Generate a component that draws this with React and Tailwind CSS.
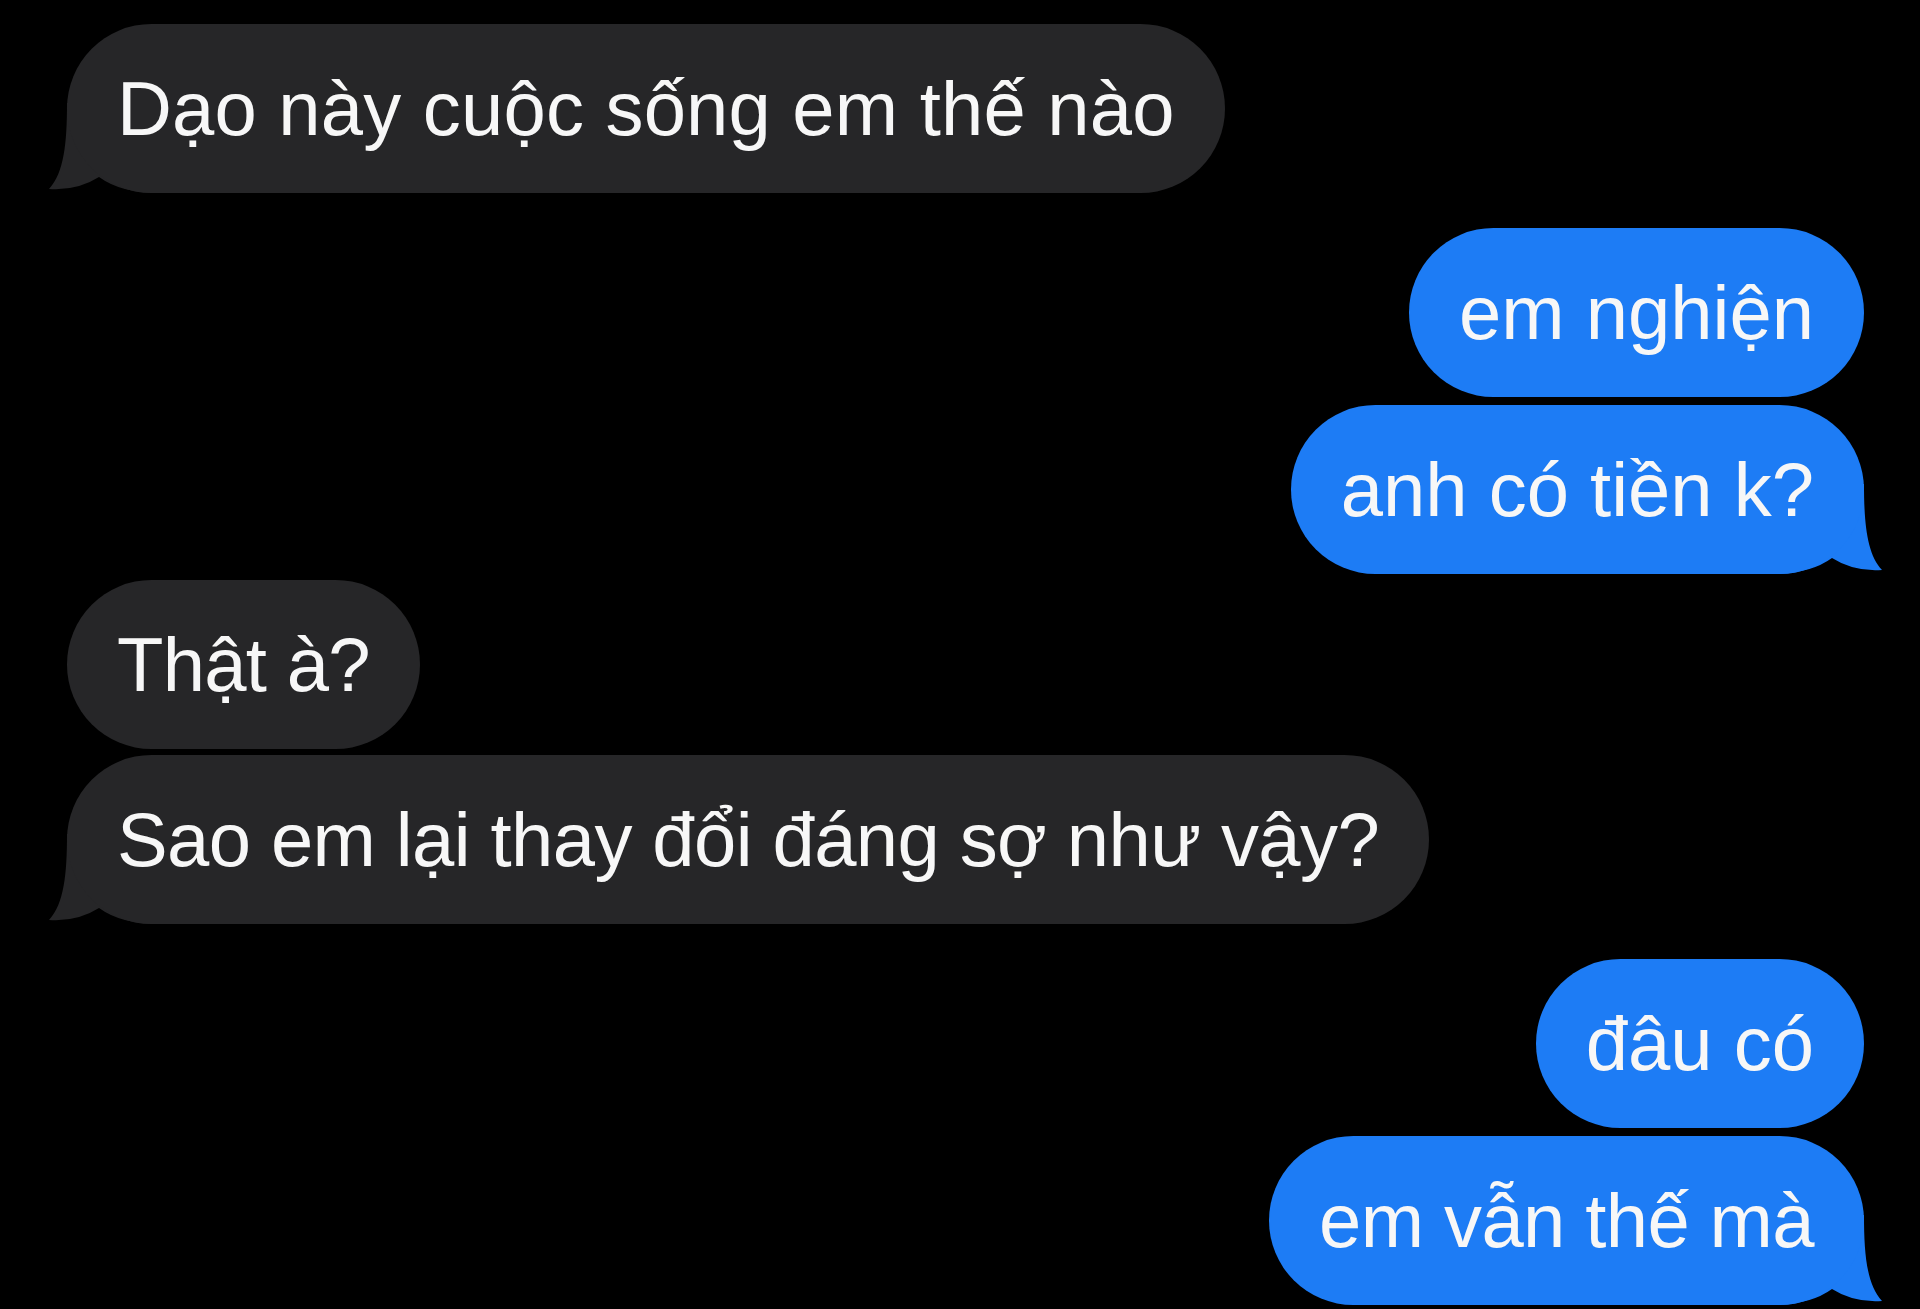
const messages = [
  { from: "them", text: "Dạo này cuộc sống em thế nào", tail: true, gap: "mt-0", track: "tracking-[0.2px]" },
  { from: "me", text: "em nghiện", tail: false, gap: "mt-[35px]", track: "tracking-normal" },
  { from: "me", text: "anh có tiền k?", tail: true, gap: "mt-[8px]", track: "tracking-normal" },
  { from: "them", text: "Thật à?", tail: false, gap: "mt-[6px]", track: "tracking-[-0.7px]" },
  { from: "them", text: "Sao em lại thay đổi đáng sợ như vậy?", tail: true, gap: "mt-[6px]", track: "tracking-[-0.6px]" },
  { from: "me", text: "đâu có", tail: false, gap: "mt-[35px]", track: "tracking-normal" },
  { from: "me", text: "em vẫn thế mà", tail: true, gap: "mt-[8px]", track: "tracking-[-0.6px]" },
];

function Tail({ side, color }) {
  // bubble tail, drawn for the left side and mirrored for the right
  return (
    <svg
      width="110"
      height="90"
      viewBox="0 0 110 90"
      className={
        side === "left"
          ? "absolute bottom-0 left-[-18px]"
          : "absolute bottom-0 right-[-18px] -scale-x-100"
      }
    >
      <path
        d="M18 0 C18 40 15 70 0 86 Q 28 88 50 74 Q 72 90 110 90 L110 0 Z"
        fill={color}
      />
    </svg>
  );
}

function Bubble({ msg }) {
  const mine = msg.from === "me";

  return (
    <div
      className={`relative ${msg.gap} ${mine ? "self-end" : "self-start"}`}
    >
      <div
        className={`relative z-10 flex h-[169px] items-center rounded-[85px] px-[50px] text-[76px] leading-none text-[#f7f7f7] ${
          mine ? "bg-[#1d7cf5]" : "bg-[#262628]"
        }`}
      >
        <span className={`whitespace-nowrap ${msg.track}`}>{msg.text}</span>
      </div>

      {msg.tail && (
        <Tail side={mine ? "right" : "left"} color={mine ? "#1d7cf5" : "#262628"} />
      )}
    </div>
  );
}

function App() {
  return (
    <div
      className="min-h-screen w-full bg-black pl-[67px] pr-[56px] pt-[24px]"
      style={{ fontFamily: '"Liberation Sans", Arial, sans-serif' }}
    >
      <div className="flex flex-col">
        {messages.map((msg, index) => (
          <Bubble key={index} msg={msg} />
        ))}
      </div>
    </div>
  );
}

export default App;
